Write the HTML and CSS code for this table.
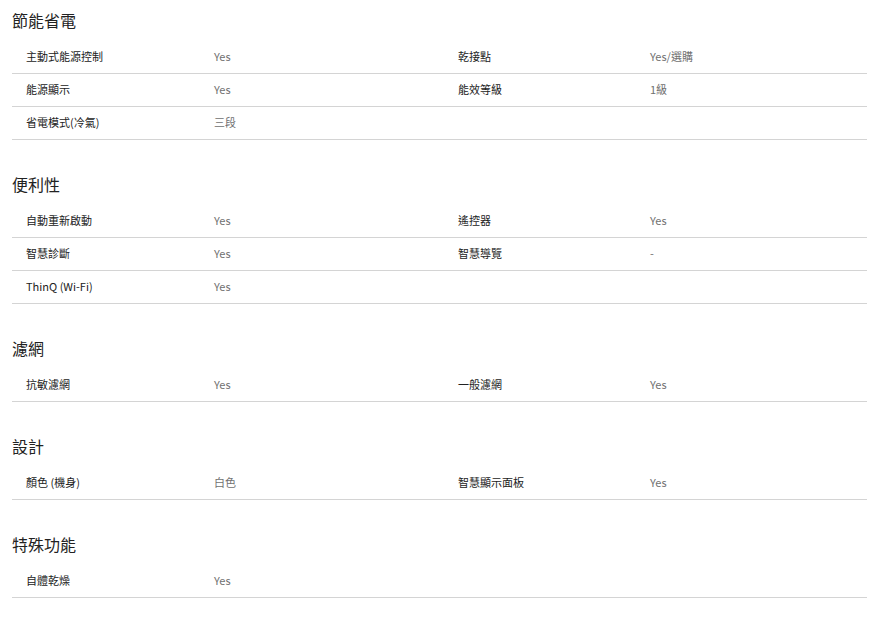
FILE: index.html
```html
<!DOCTYPE html>
<html lang="zh-Hant">
<head>
<meta charset="utf-8">
<title>規格</title>
<link rel="stylesheet" href="styles.css">
</head>
<body>
<div class="specs">
  <section class="spec-group">
    <h2 class="spec-title">節能省電</h2>
    <div class="spec-row">
      <span class="spec-label">主動式能源控制</span><span class="spec-value">Yes</span>
      <span class="spec-label">乾接點</span><span class="spec-value">Yes/選購</span>
    </div>
    <div class="spec-row">
      <span class="spec-label">能源顯示</span><span class="spec-value">Yes</span>
      <span class="spec-label">能效等級</span><span class="spec-value">1級</span>
    </div>
    <div class="spec-row">
      <span class="spec-label">省電模式(冷氣)</span><span class="spec-value">三段</span>
    </div>
  </section>
  <section class="spec-group">
    <h2 class="spec-title">便利性</h2>
    <div class="spec-row">
      <span class="spec-label">自動重新啟動</span><span class="spec-value">Yes</span>
      <span class="spec-label">遙控器</span><span class="spec-value">Yes</span>
    </div>
    <div class="spec-row">
      <span class="spec-label">智慧診斷</span><span class="spec-value">Yes</span>
      <span class="spec-label">智慧導覽</span><span class="spec-value">-</span>
    </div>
    <div class="spec-row">
      <span class="spec-label">ThinQ (Wi-Fi)</span><span class="spec-value">Yes</span>
    </div>
  </section>
  <section class="spec-group">
    <h2 class="spec-title">濾網</h2>
    <div class="spec-row">
      <span class="spec-label">抗敏濾網</span><span class="spec-value">Yes</span>
      <span class="spec-label">一般濾網</span><span class="spec-value">Yes</span>
    </div>
  </section>
  <section class="spec-group">
    <h2 class="spec-title">設計</h2>
    <div class="spec-row">
      <span class="spec-label">顏色 (機身)</span><span class="spec-value">白色</span>
      <span class="spec-label">智慧顯示面板</span><span class="spec-value">Yes</span>
    </div>
  </section>
  <section class="spec-group">
    <h2 class="spec-title">特殊功能</h2>
    <div class="spec-row">
      <span class="spec-label">自體乾燥</span><span class="spec-value">Yes</span>
    </div>
  </section>
</div>
</body>
</html>
```
FILE: styles.css
```css
html, body {
  margin: 0;
  padding: 0;
  background: #fff;
}
body {
  font-family: "Noto Sans CJK TC", "Noto Sans", "Liberation Sans", sans-serif;
  color: #222;
}
.specs {
  margin: 0 12px;
  display: flex;
  flex-direction: column;
  gap: 24px;
}
.spec-title {
  margin: 0;
  font-size: 16px;
  font-weight: 400;
  line-height: 40px;
  height: 41px;
  color: #222;
}
.spec-row {
  display: grid;
  grid-template-columns: 188px 244px 192px 1fr;
  align-items: center;
  height: 30px;
  padding: 0 0 2px 14px;
  border-bottom: 1px solid #d4d4d4;
  font-size: 11px;
  line-height: 16px;
}
.spec-label {
  color: #222;
}
.spec-value {
  color: #707070;
}
```
